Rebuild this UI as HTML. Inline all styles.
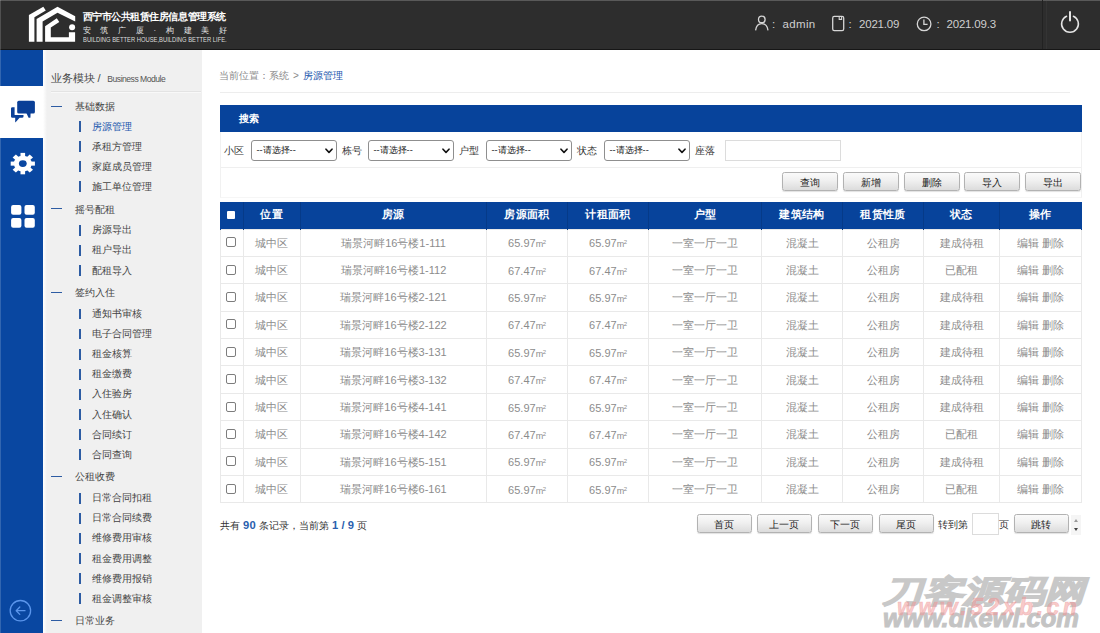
<!DOCTYPE html>
<html lang="zh">
<head>
<meta charset="utf-8">
<title>西宁市公共租赁住房信息管理系统</title>
<style>
*{box-sizing:border-box;margin:0;padding:0}
html,body{width:1100px;height:633px;overflow:hidden;background:#fff}
body{font-family:"Liberation Sans",sans-serif;font-size:11px;color:#333;position:relative}
.abs{position:absolute}
#hdr{position:absolute;left:0;top:0;width:1100px;height:50px;background:#2d2d2d;border-bottom:1px solid #161616;box-shadow:inset 0 1px 0 #595959}
#edge{position:absolute;left:0;top:0;width:1px;height:633px;background:rgba(255,255,255,.17);z-index:9}
#hdr .t1{position:absolute;left:82.5px;top:9.5px;font-family:"Liberation Serif",serif;font-weight:bold;font-size:10.4px;color:#fff;white-space:nowrap;line-height:14px;letter-spacing:-.45px}
#hdr .t2{position:absolute;left:82.5px;top:24.5px;font-size:7.8px;color:#e8e8e8;white-space:nowrap;line-height:12px;letter-spacing:9.75px}
#hdr .t3{position:absolute;left:82.5px;top:35.5px;font-size:6.3px;color:#dcdcdc;white-space:nowrap;line-height:8px;transform-origin:0 0;transform:scaleX(.925)}
#hdr .info{position:absolute;top:17px;font-size:11.5px;color:#cfcfcf;line-height:14px;white-space:nowrap}
#hdr .sep2{position:absolute;left:1046px;top:1px;width:1px;height:48px;background:#343434}
#hdr .sep{position:absolute;left:1042px;top:0;width:1px;height:49px;background:#222}
#nav{position:absolute;left:0;top:50px;width:43px;height:583px;background:#0947a1}
#nav .act{position:absolute;left:0;top:36px;width:43px;height:52px;background:#fff}
#side{position:absolute;left:43px;top:50px;width:159px;height:583px;background:#f0f0f0}
#side .ttl{position:absolute;left:7.5px;top:19px;font-size:11.2px;color:#4a4a4a;white-space:nowrap;line-height:18px}
#side .ttl small{font-size:8.6px;color:#555;letter-spacing:-.5px;margin-left:3.5px}
#side .ul{position:absolute;left:8px;top:40.5px;width:150px;height:1px;background:#e3e3e3;box-shadow:0 1px 0 #f8f8f8}
#side:before{content:"";position:absolute;left:0;top:0;width:4px;height:100%;background:linear-gradient(90deg,#fff,#f0f0f0)}
.grp{position:absolute;left:0;width:159px;height:20px;line-height:22px;font-size:10px;color:#444;padding-left:32px;white-space:nowrap}
.grp:before{content:"";position:absolute;left:8px;top:9.5px;width:11px;height:1px;background:#2d5ca3}
.itm{position:absolute;left:0;width:159px;height:20px;line-height:20px;font-size:10px;color:#444;padding-left:49px;white-space:nowrap}
.itm:before{content:"";position:absolute;left:36px;top:4.6px;width:2px;height:10.8px;background:#2d5ca3}
.itm.on{color:#1a56ad}

#main{position:absolute;left:0;top:0;width:1100px;height:633px;pointer-events:none}
#main>*{position:absolute}
.bc{left:219px;top:69px;font-size:10px;line-height:14px;color:#8a8a8a;white-space:nowrap}
.bc span{color:#1a56ad}
.bc i{font-style:normal;display:inline-block;width:13.6px;text-align:center}
.hr{left:220px;top:92px;width:850px;height:1px;background:#ededed}
.shead{left:220px;top:105px;width:862px;height:27px;background:#07439b;color:#fff;font-size:10px;font-weight:bold;line-height:27px;padding-left:18.5px}
.panel{left:220px;top:132px;width:862px;height:66px;border:1px solid #f1f1f1;border-top:none;border-bottom-color:#f6f6f6}
.frow{left:221px;top:167px;width:860px;height:1px;background:#efefef}
.lbl{top:143.6px;font-size:10px;line-height:14px;color:#333;white-space:nowrap}
.sel{top:140px;width:86px;height:21px;border:1px solid #8f8f8f;border-radius:3px;background:#fff;font-size:9.2px;line-height:19px;padding-left:4.5px;color:#222;white-space:nowrap}
.sel svg{position:absolute;right:3px;top:7px}
.inp{border:1px solid #dcdcdc;background:#fff}
.btn{width:56px;height:19px;border:1px solid #b2b2b2;border-radius:2.5px;background:linear-gradient(#fafafa,#f0f0f0 45%,#dcdcdc);font-size:10px;line-height:19.5px;text-align:center;color:#222;white-space:nowrap;box-shadow:0 1px 1px rgba(0,0,0,.12)}
table.grid{left:220px;top:202px;width:861px;border-collapse:collapse;table-layout:fixed}
table.grid th{height:27px;background:#07439b;color:#fff;font-size:10.5px;font-weight:bold;text-align:center;border-left:1px solid #053a88;letter-spacing:.3px;padding:0}
table.grid th:first-child{border-left:1px solid #07439b}
table.grid th:last-child{border-right:1px solid #07439b}
table.grid td{height:27.4px;font-size:11px;color:#8c8c8c;padding-top:1px !important;text-align:center;border:1px solid #e9e9e9;padding:0;white-space:nowrap}
.m2{font-size:9px;letter-spacing:-.3px}
.m2 sup{font-size:6px;vertical-align:3px;line-height:0}
.cb{display:inline-block;width:10px;height:10px;border:1px solid #7d7d7d;border-radius:2px;background:#fff;vertical-align:middle;position:relative;top:-2px;left:-1px}
.cbw{display:inline-block;width:8px;height:8px;background:#fff;border-radius:1px;vertical-align:middle;position:relative;top:-1.5px;left:-.5px}
.btn.pb{width:55.3px}
.pg{left:220px;top:517.7px;font-size:10px;line-height:14px;color:#333;white-space:nowrap}
.pg b{color:#2a5fae;font-size:11.2px;margin:0 .3px;letter-spacing:.1px}
.pgt{top:517.7px;font-size:10px;line-height:14px;color:#333;white-space:nowrap}
.spin{left:1071px;top:514.5px;width:10px;height:20.5px;background:#f5f5f5}
.spin i{position:absolute;left:2.5px;width:0;height:0;border-left:2.5px solid transparent;border-right:2.5px solid transparent}
.spin .u{top:4px;border-bottom:3px solid #9a9a9a}
.spin .d{top:13.5px;border-top:3px solid #444}
.wm1{left:882px;top:568px;font-size:31px;line-height:48px;font-weight:bold;font-style:italic;color:#c8c8c8;-webkit-text-stroke:1.3px #c8c8c8;white-space:nowrap;transform-origin:0 50%;transform:scaleX(1.31)}
.wm2{left:883px;top:603px;font-size:25.5px;line-height:30px;font-weight:bold;font-style:italic;color:#c4c4c4;-webkit-text-stroke:1px #c4c4c4;white-space:nowrap;letter-spacing:0}
.wm3{left:897px;top:593px;font-size:23px;line-height:28px;font-weight:bold;font-style:italic;color:rgba(240,150,150,.5);-webkit-text-stroke:.6px rgba(240,150,150,.5);white-space:nowrap;letter-spacing:3.5px}
</style>
</head>
<body>
<div id="hdr">
  <svg class="abs" style="left:0;top:0" width="90" height="50" viewBox="0 0 90 50">
    <g fill="#fff">
      <polygon points="28.9,41.8 28.9,15.1 43.3,6.8 45.8,10.5 34.4,17.3 34.4,41.8"/>
      <polygon points="36.6,41.8 36.6,19.1 57.5,6.8 75.2,16.2 75.2,21.4 57.5,12.7 42.6,21.4 42.6,41.8"/>
      <polygon points="45.1,41.8 45.1,26.2 56.8,18.2 59.3,21.9 50.8,27.4 50.8,37.2 68.9,37.2 68.9,32.2 75.1,32.2 75.1,41.8"/>
      <circle cx="72.1" cy="27.2" r="3"/>
    </g>
  </svg>
  <div class="t1">西宁市公共租赁住房信息管理系统</div>
  <div class="t2">安筑广厦·构建美好</div>
  <div class="t3">BUILDING BETTER HOUSE,BUILDING BETTER LIFE.</div>
  <svg class="abs" style="left:750px;top:10px" width="260" height="30" viewBox="750 10 260 30" fill="none" stroke="#d6d6d6" stroke-width="1.3">
    <circle cx="761.8" cy="19.4" r="3.3"/>
    <path d="M755.6 30.3 C756.2 25.6 758.6 23.6 761.8 23.6 C765 23.6 767.4 25.6 768 30.3"/>
    <rect x="832.7" y="16.3" width="11" height="14.4" rx="1.6"/>
    <path d="M839.2 16.6 V19.4 H841.6 V16.6" stroke-width="1.1"/>
    <circle cx="924.1" cy="23.9" r="6.8"/>
    <path d="M923.9 19.6 V24.4 H927.6"/>
  </svg>
  <div class="info" style="left:772px">:</div><div class="info" style="left:782.5px;letter-spacing:.35px">admin</div>
  <div class="info" style="left:848.5px">:</div><div class="info" style="left:859px;letter-spacing:-.2px">2021.09</div>
  <div class="info" style="left:936.5px">:</div><div class="info" style="left:946.5px;letter-spacing:-.2px">2021.09.3</div>
  <div class="sep"></div><div class="sep2"></div>
  <svg class="abs" style="left:1055px;top:8px" width="30" height="32" viewBox="1055 8 30 32" fill="none" stroke="#e4e4e4" stroke-linecap="round">
    <path d="M1066.6 16.2 A8.4 8.4 0 1 0 1073.4 16.2" stroke-width="1.5"/>
    <path d="M1070 12 V20.4" stroke-width="2"/>
  </svg>
</div>
<div id="edge"></div>
<div id="nav"><div class="act"></div>
  <svg class="abs" style="left:0;top:36px" width="43" height="52" viewBox="0 86 43 52">
    <g fill="#0a3f97">
      <rect x="17.2" y="100.7" width="17.7" height="12.8" rx="1.6"/>
      <polygon points="26.4,113 30.6,113 30.4,117.8 28.6,117.8"/>
      <path d="M11 108.6 Q11 107.2 12.4 107.2 H14.6 V115 H23.5 V116.4 Q23.5 117.8 22 117.8 H19.6 L15.6 122.2 H15.2 V117.8 H12.4 Q11 117.8 11 116.4 Z"/>
    </g>
  </svg>
  <svg class="abs" style="left:0;top:88px" width="43" height="52" viewBox="0 138 43 52">
    <g fill="#fff" transform="translate(22.8 163.6) scale(1 .885)">
      <rect x="-2.3" y="-12.1" width="4.6" height="24.2"/>
      <rect x="-2.3" y="-12.1" width="4.6" height="24.2" transform="rotate(45)"/>
      <rect x="-2.3" y="-12.1" width="4.6" height="24.2" transform="rotate(90)"/>
      <rect x="-2.3" y="-12.1" width="4.6" height="24.2" transform="rotate(135)"/>
      <circle r="8.9"/>
      <circle r="3.9" fill="#0947a1"/>
    </g>
  </svg>
  <svg class="abs" style="left:0;top:140px" width="43" height="52" viewBox="0 190 43 52">
    <g fill="#fff">
      <rect x="11.1" y="205" width="10.3" height="9.8" rx="2"/>
      <rect x="24.5" y="205" width="10.3" height="9.8" rx="2"/>
      <rect x="11.1" y="217.9" width="10.3" height="9.8" rx="2"/>
      <rect x="24.5" y="217.9" width="10.3" height="9.8" rx="2"/>
    </g>
  </svg>
  <svg class="abs" style="left:5px;top:545px" width="32" height="32" viewBox="5 595 32 32" fill="none" stroke="#5b96ec" stroke-width="1.3" stroke-linecap="round" stroke-linejoin="round">
    <circle cx="20.4" cy="610.7" r="10.2"/>
    <path d="M25 610.7 H16.4 M19.8 607 L16.2 610.7 L19.8 614.4"/>
  </svg>
</div>
<div id="side">
  <div class="ttl">业务模块 / <small>Business Module</small></div>
  <div class="ul"></div>
  <div class="grp" style="top:46.20px">基础数据</div>
  <div class="itm on" style="top:66.50px">房源管理</div>
  <div class="itm" style="top:86.60px">承租方管理</div>
  <div class="itm" style="top:106.70px">家庭成员管理</div>
  <div class="itm" style="top:126.80px">施工单位管理</div>
  <div class="grp" style="top:148.55px">摇号配租</div>
  <div class="itm" style="top:170.30px">房源导出</div>
  <div class="itm" style="top:190.40px">租户导出</div>
  <div class="itm" style="top:210.50px">配租导入</div>
  <div class="grp" style="top:232.25px">签约入住</div>
  <div class="itm" style="top:254.00px">通知书审核</div>
  <div class="itm" style="top:274.10px">电子合同管理</div>
  <div class="itm" style="top:294.20px">租金核算</div>
  <div class="itm" style="top:314.30px">租金缴费</div>
  <div class="itm" style="top:334.40px">入住验房</div>
  <div class="itm" style="top:354.50px">入住确认</div>
  <div class="itm" style="top:374.60px">合同续订</div>
  <div class="itm" style="top:394.70px">合同查询</div>
  <div class="grp" style="top:416.45px">公租收费</div>
  <div class="itm" style="top:438.20px">日常合同扣租</div>
  <div class="itm" style="top:458.30px">日常合同续费</div>
  <div class="itm" style="top:478.40px">维修费用审核</div>
  <div class="itm" style="top:498.50px">租金费用调整</div>
  <div class="itm" style="top:518.60px">维修费用报销</div>
  <div class="itm" style="top:538.70px">租金调整审核</div>
  <div class="grp" style="top:560.45px">日常业务</div>
</div>
<div id="main">
  <div class="bc">当前位置：系统<i>&gt;</i><span>房源管理</span></div>
  <div class="hr"></div>
  <div class="shead">搜索</div>
  <div class="panel"></div>
  <div class="frow"></div>
  <div class="lbl" style="left:224px">小区</div><div class="sel" style="left:251px">--请选择--<svg width="8" height="6" viewBox="0 0 8 6"><path d="M1 1.2 L4 4.4 L7 1.2" fill="none" stroke="#111" stroke-width="1.6" stroke-linecap="round" stroke-linejoin="round"/></svg></div>
  <div class="lbl" style="left:342px">栋号</div><div class="sel" style="left:368px">--请选择--<svg width="8" height="6" viewBox="0 0 8 6"><path d="M1 1.2 L4 4.4 L7 1.2" fill="none" stroke="#111" stroke-width="1.6" stroke-linecap="round" stroke-linejoin="round"/></svg></div>
  <div class="lbl" style="left:459px">户型</div><div class="sel" style="left:486px">--请选择--<svg width="8" height="6" viewBox="0 0 8 6"><path d="M1 1.2 L4 4.4 L7 1.2" fill="none" stroke="#111" stroke-width="1.6" stroke-linecap="round" stroke-linejoin="round"/></svg></div>
  <div class="lbl" style="left:577px">状态</div><div class="sel" style="left:604px">--请选择--<svg width="8" height="6" viewBox="0 0 8 6"><path d="M1 1.2 L4 4.4 L7 1.2" fill="none" stroke="#111" stroke-width="1.6" stroke-linecap="round" stroke-linejoin="round"/></svg></div>
  <div class="lbl" style="left:695px">座落</div><div class="inp" style="left:725px;top:140px;width:116px;height:21px"></div>
  <div class="btn" style="left:782px;top:172px">查询</div>
  <div class="btn" style="left:843px;top:172px">新增</div>
  <div class="btn" style="left:904px;top:172px">删除</div>
  <div class="btn" style="left:964px;top:172px">导入</div>
  <div class="btn" style="left:1025px;top:172px">导出</div>
  <table class="grid" cellspacing="0" cellpadding="0">
    <colgroup><col style="width:22.5px"><col style="width:57.5px"><col style="width:186px"><col style="width:81px"><col style="width:81px"><col style="width:113px"><col style="width:81px"><col style="width:81px"><col style="width:76px"><col style="width:82px"></colgroup>
    <tr class="th"><th><span class="cbw"></span></th><th>位置</th><th>房源</th><th>房源面积</th><th>计租面积</th><th>户型</th><th>建筑结构</th><th>租赁性质</th><th>状态</th><th>操作</th></tr>
    <tr><td><span class="cb"></span></td><td>城中区</td><td>瑞景河畔16号楼1-111</td><td class="n">65.97<span class="m2">m<sup>2</sup></span></td><td class="n">65.97<span class="m2">m<sup>2</sup></span></td><td>一室一厅一卫</td><td>混凝土</td><td>公租房</td><td>建成待租</td><td>编辑 删除</td></tr>
    <tr><td><span class="cb"></span></td><td>城中区</td><td>瑞景河畔16号楼1-112</td><td class="n">67.47<span class="m2">m<sup>2</sup></span></td><td class="n">67.47<span class="m2">m<sup>2</sup></span></td><td>一室一厅一卫</td><td>混凝土</td><td>公租房</td><td>已配租</td><td>编辑 删除</td></tr>
    <tr><td><span class="cb"></span></td><td>城中区</td><td>瑞景河畔16号楼2-121</td><td class="n">65.97<span class="m2">m<sup>2</sup></span></td><td class="n">65.97<span class="m2">m<sup>2</sup></span></td><td>一室一厅一卫</td><td>混凝土</td><td>公租房</td><td>建成待租</td><td>编辑 删除</td></tr>
    <tr><td><span class="cb"></span></td><td>城中区</td><td>瑞景河畔16号楼2-122</td><td class="n">67.47<span class="m2">m<sup>2</sup></span></td><td class="n">67.47<span class="m2">m<sup>2</sup></span></td><td>一室一厅一卫</td><td>混凝土</td><td>公租房</td><td>建成待租</td><td>编辑 删除</td></tr>
    <tr><td><span class="cb"></span></td><td>城中区</td><td>瑞景河畔16号楼3-131</td><td class="n">65.97<span class="m2">m<sup>2</sup></span></td><td class="n">65.97<span class="m2">m<sup>2</sup></span></td><td>一室一厅一卫</td><td>混凝土</td><td>公租房</td><td>建成待租</td><td>编辑 删除</td></tr>
    <tr><td><span class="cb"></span></td><td>城中区</td><td>瑞景河畔16号楼3-132</td><td class="n">67.47<span class="m2">m<sup>2</sup></span></td><td class="n">67.47<span class="m2">m<sup>2</sup></span></td><td>一室一厅一卫</td><td>混凝土</td><td>公租房</td><td>建成待租</td><td>编辑 删除</td></tr>
    <tr><td><span class="cb"></span></td><td>城中区</td><td>瑞景河畔16号楼4-141</td><td class="n">65.97<span class="m2">m<sup>2</sup></span></td><td class="n">65.97<span class="m2">m<sup>2</sup></span></td><td>一室一厅一卫</td><td>混凝土</td><td>公租房</td><td>建成待租</td><td>编辑 删除</td></tr>
    <tr><td><span class="cb"></span></td><td>城中区</td><td>瑞景河畔16号楼4-142</td><td class="n">67.47<span class="m2">m<sup>2</sup></span></td><td class="n">67.47<span class="m2">m<sup>2</sup></span></td><td>一室一厅一卫</td><td>混凝土</td><td>公租房</td><td>已配租</td><td>编辑 删除</td></tr>
    <tr><td><span class="cb"></span></td><td>城中区</td><td>瑞景河畔16号楼5-151</td><td class="n">65.97<span class="m2">m<sup>2</sup></span></td><td class="n">65.97<span class="m2">m<sup>2</sup></span></td><td>一室一厅一卫</td><td>混凝土</td><td>公租房</td><td>建成待租</td><td>编辑 删除</td></tr>
    <tr><td><span class="cb"></span></td><td>城中区</td><td>瑞景河畔16号楼6-161</td><td class="n">65.97<span class="m2">m<sup>2</sup></span></td><td class="n">65.97<span class="m2">m<sup>2</sup></span></td><td>一室一厅一卫</td><td>混凝土</td><td>公租房</td><td>已配租</td><td>编辑 删除</td></tr>
  </table>
  <div class="pg">共有 <b>90</b> 条记录，当前第 <b>1 / 9</b> 页</div>
  <div class="btn pb" style="left:696.7px;top:514px">首页</div>
  <div class="btn pb" style="left:756.7px;top:514px">上一页</div>
  <div class="btn pb" style="left:817.7px;top:514px">下一页</div>
  <div class="btn pb" style="left:878.7px;top:514px">尾页</div>
  <div class="pgt" style="left:938px">转到第</div>
  <div class="inp" style="left:972px;top:513px;width:27px;height:22px"></div>
  <div class="pgt" style="left:999px">页</div>
  <div class="btn pb" style="left:1013.7px;top:514px">跳转</div>
  <div class="spin"><i class="u"></i><i class="d"></i></div>
  <div class="wm1">刀客源码网</div>
  <div class="wm2">www.dkewl.com</div>
  <div class="wm3">www.52xb.cn</div>
</div>
</body>
</html>
